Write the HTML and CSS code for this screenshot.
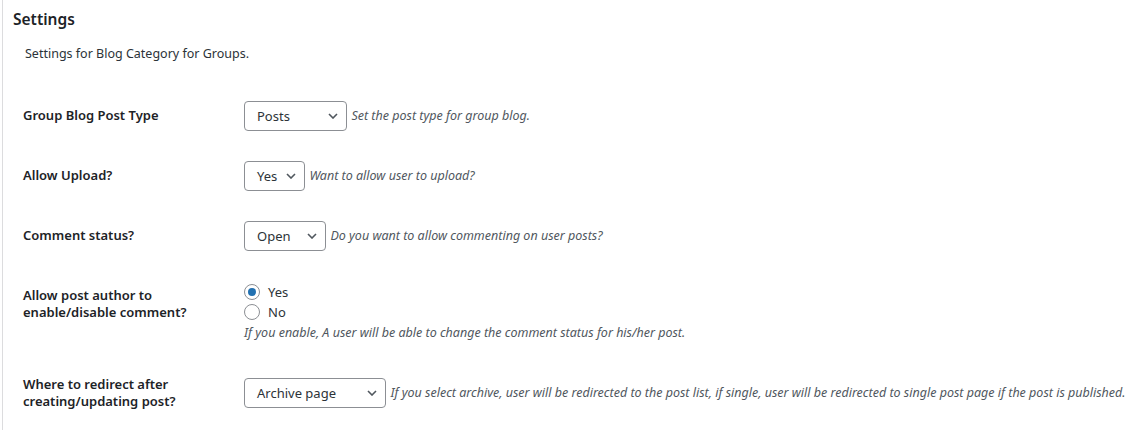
FILE: index.html
```html
<!DOCTYPE html>
<html lang="en">
<head>
<meta charset="utf-8">
<title>Settings</title>
<link rel="stylesheet" href="styles.css">
</head>
<body>
<div class="postbox">
  <h2 class="postbox-title">Settings</h2>
  <div class="inside">
    <p class="intro">Settings for Blog Category for Groups.</p>
    <table class="form-table">
      <tbody>
        <tr>
          <th>Group Blog Post Type</th>
          <td>
            <span class="select select-posts"><span class="select-text">Posts</span><svg class="chev" width="10" height="6" viewBox="0 0 10 6"><path d="M1 1l4 4 4-4" fill="none" stroke="#50575e" stroke-width="1.6"/></svg></span>
            <span class="description">Set the post type for group blog.</span>
          </td>
        </tr>
        <tr>
          <th>Allow Upload?</th>
          <td>
            <span class="select select-yes"><span class="select-text">Yes</span><svg class="chev" width="10" height="6" viewBox="0 0 10 6"><path d="M1 1l4 4 4-4" fill="none" stroke="#50575e" stroke-width="1.6"/></svg></span>
            <span class="description">Want to allow user to upload?</span>
          </td>
        </tr>
        <tr>
          <th>Comment status?</th>
          <td>
            <span class="select select-open"><span class="select-text">Open</span><svg class="chev" width="10" height="6" viewBox="0 0 10 6"><path d="M1 1l4 4 4-4" fill="none" stroke="#50575e" stroke-width="1.6"/></svg></span>
            <span class="description">Do you want to allow commenting on user posts?</span>
          </td>
        </tr>
        <tr>
          <th>Allow post author to enable/disable comment?</th>
          <td class="radio-cell">
            <label class="radio"><span class="radio-circle checked"></span>Yes</label>
            <label class="radio"><span class="radio-circle"></span>No</label>
            <p class="description block">If you enable, A user will be able to change the comment status for his/her post.</p>
          </td>
        </tr>
        <tr>
          <th>Where to redirect after creating/updating post?</th>
          <td>
            <span class="select select-archive"><span class="select-text">Archive page</span><svg class="chev" width="10" height="6" viewBox="0 0 10 6"><path d="M1 1l4 4 4-4" fill="none" stroke="#50575e" stroke-width="1.6"/></svg></span>
            <span class="description">If you select archive, user will be redirected to the post list, if single, user will be redirected to single post page if the post is published.</span>
          </td>
        </tr>
      </tbody>
    </table>
  </div>
</div>
</body>
</html>
```

FILE: styles.css
```css
html, body {
  margin: 0;
  padding: 0;
  background: #fff;
}
body {
  padding-left: 2px;
  font-family: "Noto Sans", "Open Sans", sans-serif;
  font-size: 13px;
  color: #1d2327;
}
.postbox {
  border-left: 1px solid #dcdcde;
  min-height: 430px;
}
.postbox-title {
  margin: 0;
  padding: 9px 10px 0 10px;
  font-size: 15.5px;
  font-weight: 600;
  line-height: 21px;
  color: #1d2327;
}
.inside {
  padding: 0 0 0 20px;
}
.intro {
  margin: 14px 0 0 2px;
  font-size: 12.5px;
  line-height: 20px;
  color: #2c3338;
}
.form-table {
  border-collapse: collapse;
  margin-top: 22px;
}
.form-table th {
  width: 200px;
  padding: 21px 11px 20px 0;
  text-align: left;
  vertical-align: top;
  font-size: 13px;
  font-weight: 600;
  line-height: 17px;
  color: #1d2327;
}
.form-table td {
  padding: 15px 10px;
  vertical-align: middle;
  line-height: 20px;
  white-space: nowrap;
}
.form-table td.radio-cell {
  padding-bottom: 12px;
}
.select {
  display: inline-flex;
  align-items: center;
  justify-content: space-between;
  box-sizing: border-box;
  height: 30px;
  padding: 0 8px 0 12px;
  border: 1px solid #8c8f94;
  border-radius: 4px;
  background: #fff;
  font-size: 13px;
  color: #2c3338;
  vertical-align: middle;
}
.select-posts { width: 103px; }
.select-yes { width: 61px; }
.select-open { width: 82px; }
.select-archive { width: 142px; }
.chev {
  display: block;
  flex: none;
}
.description {
  font-style: italic;
  font-size: 12.5px;
  color: #50575e;
  vertical-align: middle;
  margin-left: 1px;
}
.description.block {
  display: block;
  margin: 1px 0 0 0;
  line-height: 20px;
}
.radio {
  display: flex;
  align-items: center;
  gap: 8px;
  height: 20px;
  font-size: 13px;
  color: #2c3338;
}
.radio:first-child {
  margin-top: 1px;
}
.radio-circle {
  box-sizing: border-box;
  width: 16px;
  height: 16px;
  border: 1px solid #8c8f94;
  border-radius: 50%;
  display: flex;
  align-items: center;
  justify-content: center;
  background: #fff;
}
.radio-circle.checked::after {
  content: "";
  width: 8px;
  height: 8px;
  border-radius: 50%;
  background: #2271b1;
}
```
